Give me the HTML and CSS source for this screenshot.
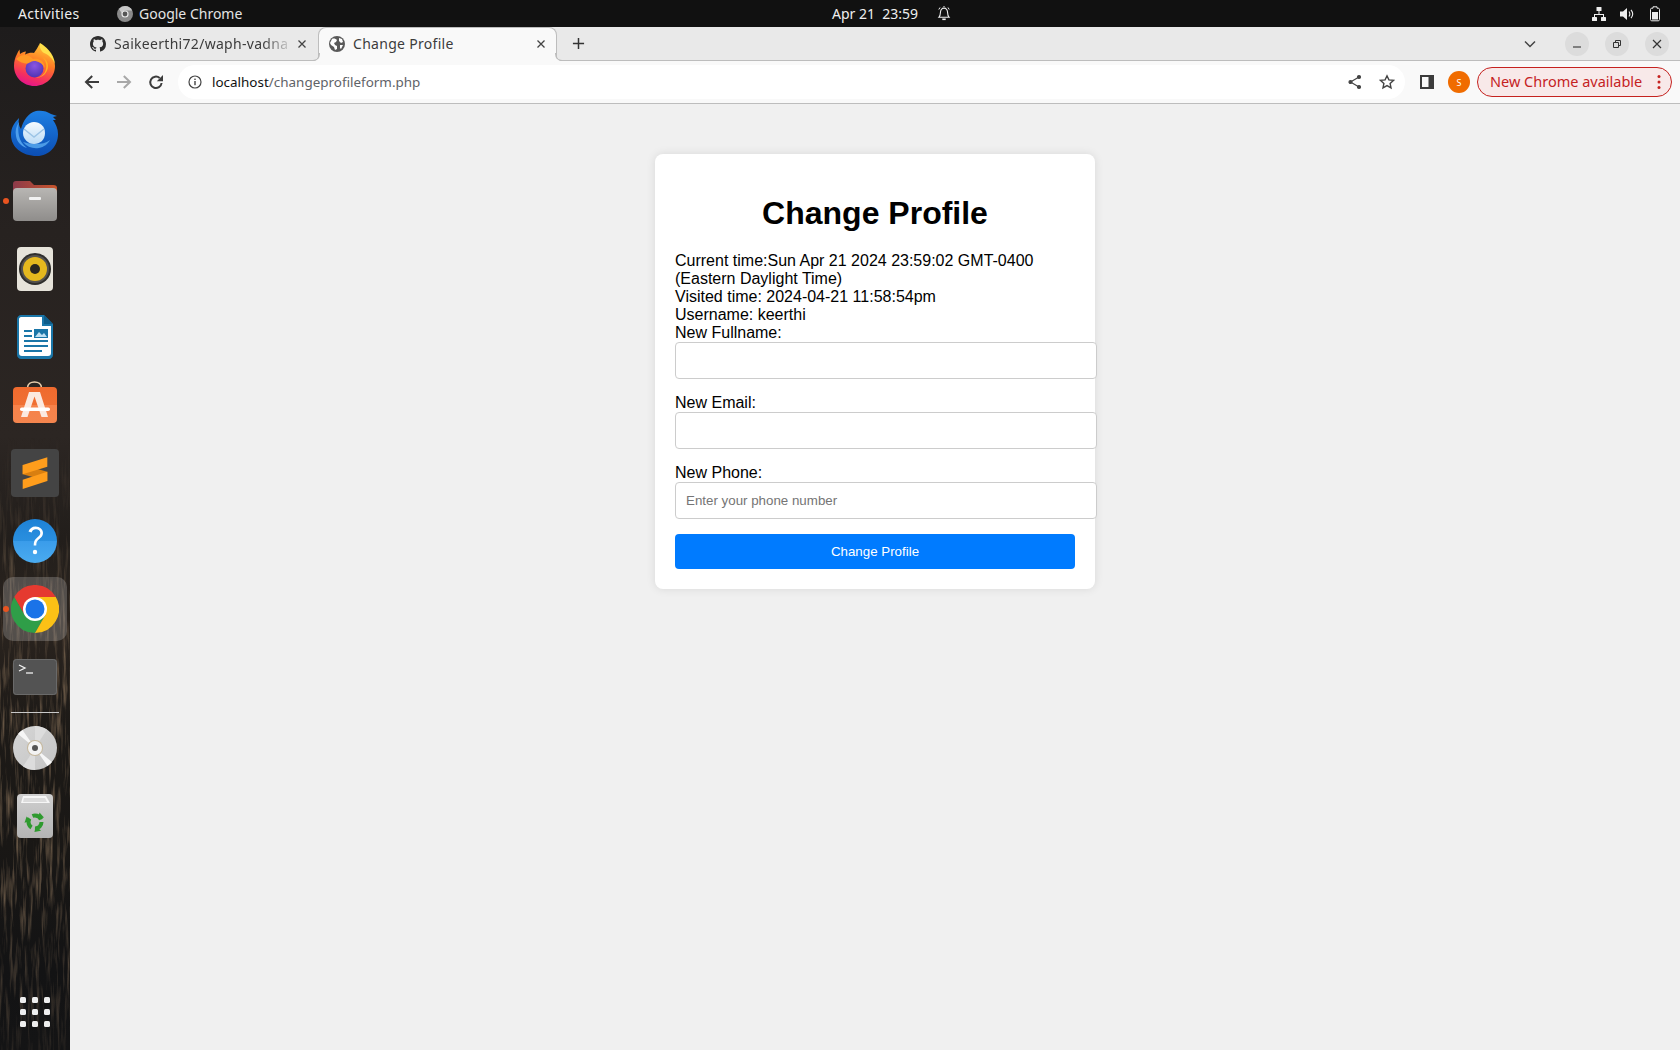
FILE: index.html
```html
<!DOCTYPE html>
<html lang="en">
<head>
<meta charset="utf-8">
<title>Change Profile</title>
<link rel="stylesheet" href="styles.css">
</head>
<body>
<div class="desktop">
  <header class="topbar">
    <div class="top-left">
      <span class="activities">Activities</span>
      <span class="app-menu">
        <svg class="app-menu-icon" viewBox="0 0 16 16"><circle cx="8" cy="8" r="8" fill="#8a8a8a"/><path d="M8 0a8 8 0 0 1 7.2 4.5H8A3.6 3.6 0 0 0 4.6 7L2 3a8 8 0 0 1 6-3z" fill="#c8c8c8"/><circle cx="8" cy="8" r="3.6" fill="#e8e8e8"/><circle cx="8" cy="8" r="2.4" fill="#555"/></svg>
        Google Chrome
      </span>
    </div>
    <div class="top-clock">
      <span>Apr 21&nbsp;&nbsp;23:59</span>
      <svg class="bell" viewBox="0 0 16 16" fill="none" stroke="#eee" stroke-width="1.1"><path d="M3 12.2c1-1 1.3-2.4 1.4-4.4C4.5 5 6 3.2 8 3.2s3.500 1.800 3.600 4.600c.1 2 .4 3.400 1.400 4.400z"/><path d="M7 2.600 8 1.400l1 1.200M2.800 4.500 4 2.500M13.200 4.500 12 2.500" stroke-width="1"/><path d="M6.300 14.300h3.400" stroke-width="1.600"/></svg>
    </div>
    <div class="top-status">
      <svg class="status-icon" viewBox="0 0 16 16" fill="#eee"><rect x="5.500" y="1" width="5" height="4" rx=".6"/><rect x="1" y="11" width="5" height="4" rx=".6"/><rect x="10" y="11" width="5" height="4" rx=".6"/><path d="M7.500 5h1v3h4.500v3h-1V9H4v2H3V8h4.500z"/></svg>
      <svg class="status-icon" viewBox="0 0 16 16" fill="#eee"><path d="M1 5.500h3L8 2v12l-4-3.500H1z"/><path d="M10 5.500c1 1.500 1 3.500 0 5M12 3.800c2 2.500 2 6 0 8.400" fill="none" stroke="#eee" stroke-width="1.100"/></svg>
      <svg class="status-icon" viewBox="0 0 16 16"><path d="M6 .8h4v1.400h1.300c.7 0 1.200.5 1.200 1.200v10.200c0 .7-.5 1.200-1.200 1.200H4.700c-.7 0-1.200-.5-1.200-1.200V3.400c0-.7.5-1.200 1.200-1.200H6z" fill="none" stroke="#eee" stroke-width="1"/><rect x="5" y="6" width="6" height="7.500" fill="#eee"/></svg>
    </div>
  </header>

  <nav class="dock">
    <svg class="dock-grain" width="70" height="1023">
      <defs>
        <filter id="grain" x="0" y="0" width="100%" height="100%">
          <feTurbulence type="fractalNoise" baseFrequency=".3 .025" numOctaves="3" seed="7"/>
          <feColorMatrix values="0 0 0 0 .3  0 0 0 0 .2  0 0 0 0 .12  1.700 0 0 0 -.8"/>
        </filter>
      </defs>
      <rect width="70" height="1023" filter="url(#grain)"/>
    </svg>
    <div class="dock-item">
      <svg class="dock-icon" viewBox="0 0 48 48">
        <defs>
          <linearGradient id="ff1" x1=".75" y1="0" x2=".4" y2="1"><stop offset="0" stop-color="#ffd23a"/><stop offset=".45" stop-color="#ff7a24"/><stop offset=".8" stop-color="#f5305f"/><stop offset="1" stop-color="#e4168a"/></linearGradient>
          <radialGradient id="ff2" cx=".5" cy=".35" r=".65"><stop offset="0" stop-color="#8a55e2"/><stop offset="1" stop-color="#4f34b4"/></radialGradient>
        </defs>
        <path d="M29 2c-1 4 2 6 6 9 5 4 9 8 9 14 0 11-9 20-20.500 20S3 36 3 25c0-5 1-8 3-12 .5-1.500 1.500-3 2.500-4.500l.5 4.500c2-1.500 4-2.500 6-2.500l-1 3c3-1.500 6-2 9-1.500C25 9 27 6 29 2z" fill="url(#ff1)"/>
        <path d="M29 2c5 3 14 10 15 21-2-5-6-9-11-11-3-2-5-6-4-10z" fill="#ffe04a"/>
        <circle cx="23.500" cy="27.500" r="9" fill="url(#ff2)"/>
        <path d="M5 18c4-4 9-5 13-3 2 1 3 2 4 3 5-1 11 1 12 9-3-5-7-7-11-7-4 .5-5 3-8 2.500C10 22 8 20 5 18z" fill="#ff9a26"/>
        <path d="M31 16c4 3 5 8 4 12-1 5-5 8-10 9 6 0 12-5 12-12 0-4-2-7-6-9z" fill="#ffb01f"/>
      </svg>
    </div>
    <div class="dock-item">
      <svg class="dock-icon" viewBox="0 0 48 48">
        <defs>
          <linearGradient id="tb1" x1="0" y1="0" x2="0" y2="1"><stop offset="0" stop-color="#1d7fe2"/><stop offset="1" stop-color="#0b4eb4"/></linearGradient>
          <linearGradient id="tb2" x1="0" y1="0" x2="0" y2="1"><stop offset="0" stop-color="#f4fafe"/><stop offset="1" stop-color="#bcdcf6"/></linearGradient>
        </defs>
        <path d="M25 2c5-1 11 0 15 3l6 2-4 1 3 3-3 0c3 4 5 9 5 14 0 12-9 22-21 22C11 47 0 38 0 26 0 19 3 14 8 9c-1 5 0 8 2 11 2-8 7-16 15-18z" fill="url(#tb1)"/>
        <path d="M8 13c-3 4-4 9-3 14 1 6 5 10 11 12-4-3-7-7-8-12-1-5-1-9 0-14z" fill="#4e9fec"/>
        <path d="M12 33c4 5 10 7 16 6 5-1 9-4 11-8-4 3-9 4-14 4-5 0-9-1-13-2z" fill="#4b9be6"/>
        <path d="M23 13c6 0 11 4 11 11s-5 11-11 11-11-5-11-11 5-11 11-11z" fill="url(#tb2)"/>
        <path d="M13 20l10 8 10-8" fill="none" stroke="#9cc4e6" stroke-width="1.400"/>
      </svg>
    </div>
    <div class="dock-item is-running">
      <svg class="dock-icon" viewBox="0 0 48 48">
        <defs>
          <linearGradient id="fo1" x1="0" y1="0" x2="0" y2="1"><stop offset="0" stop-color="#b8b6b3"/><stop offset="1" stop-color="#8f8d8b"/></linearGradient>
          <linearGradient id="fo2" x1="0" y1="0" x2="1" y2="0"><stop offset="0" stop-color="#8c3a4a"/><stop offset="1" stop-color="#c9552c"/></linearGradient>
        </defs>
        <path d="M2 7c0-2 1-3 3-3h14l4 4h19c3 0 4 1 4 3v8H2z" fill="url(#fo2)"/>
        <rect x="2" y="11" width="44" height="33" rx="4" fill="url(#fo1)"/>
        <rect x="18" y="20" width="12" height="3" rx="1" fill="#f2f2f2"/>
      </svg>
    </div>
    <div class="dock-item">
      <svg class="dock-icon" viewBox="0 0 48 48">
        <rect x="6" y="2" width="36" height="44" rx="4" fill="#e6e3da"/>
        <circle cx="24" cy="24" r="16" fill="#2f2e2c"/>
        <circle cx="24" cy="24" r="14" fill="#55524e"/>
        <circle cx="24" cy="24" r="12" fill="#e5b81e"/>
        <circle cx="24" cy="24" r="5" fill="#2a2620"/>
      </svg>
    </div>
    <div class="dock-item">
      <svg class="dock-icon" viewBox="0 0 48 48">
        <path d="M10 2h23l9 9v31c0 2-2 4-4 4H10c-2 0-4-2-4-4V6c0-2 2-4 4-4z" fill="#1a76a8"/>
        <path d="M10 4h21v9h9v27c0 2-1 3-3 3H11c-2 0-3-1-3-3V6c0-1 1-2 2-2z" fill="#fff"/>
        <path d="M33 2l9 9h-9z" fill="#0e5d8a"/>
        <path d="M13 17h8v2h-8zM13 22h8v2h-8zM13 27h24v2H13zM13 32h24v2H13zM13 37h18v2H13z" fill="#1a76a8"/>
        <rect x="23" y="16" width="14" height="9" fill="#1a76a8"/>
        <path d="M24 24l4-5 3 3 2-2 3 4z" fill="#bfe0f2"/>
      </svg>
    </div>
    <div class="dock-item">
      <svg class="dock-icon" viewBox="0 0 48 48">
        <defs><linearGradient id="st1" x1="0" y1="0" x2="0" y2="1"><stop offset="0" stop-color="#ef6a2e"/><stop offset=".5" stop-color="#f06f33"/><stop offset=".5" stop-color="#f6824a"/><stop offset="1" stop-color="#f4854e"/></linearGradient></defs>
        <path d="M16.500 7c0-8 14-8 14 0" fill="none" stroke="#e9cfae" stroke-width="1.600"/>
        <rect x="2" y="6" width="44" height="36" rx="4" fill="url(#st1)"/>
        <path d="M18 11h11l8 25h-6.500L23.500 15.500 16.500 36H10z" fill="#fbe9e0"/>
        <rect x="9" y="26.500" width="30" height="3.500" rx="1.750" fill="#fff"/>
      </svg>
    </div>
    <div class="dock-item">
      <svg class="dock-icon" viewBox="0 0 48 48">
        <rect width="48" height="48" rx="4" fill="#444"/>
        <path d="M11.700 16 36.300 22.700V32L11.700 25.300z" fill="#d97f10"/>
        <path d="M11.700 16 36.300 8.300V17.700L11.700 25.300z" fill="#ff9d1c"/>
        <path d="M11.700 30.700 36.300 22.700V32L11.700 40z" fill="#ff9d1c"/>
      </svg>
    </div>
    <div class="dock-item">
      <svg class="dock-icon" viewBox="0 0 48 48">
        <defs><linearGradient id="he1" x1="0" y1="0" x2="0" y2="1"><stop offset="0" stop-color="#1e82d6"/><stop offset=".5" stop-color="#2a8fdf"/><stop offset=".5" stop-color="#3a9cea"/><stop offset="1" stop-color="#4aabf0"/></linearGradient></defs>
        <circle cx="24" cy="24" r="22" fill="url(#he1)"/>
        <path d="M17.500 14.500c1-3 3.500-5 7-5 4.500 0 7.500 3 7.500 6.500 0 3-2 4.800-4 6.300-2 1.500-2.700 2.900-2.700 6.200h-2.600c0-4 1-6 3.300-7.800 2-1.500 3.300-2.700 3.300-4.700 0-2-1.800-3.700-4.300-3.700-2.200 0-3.700 1.200-4.400 3.100z" fill="#fff"/>
        <circle cx="24" cy="35" r="2.200" fill="#fff"/>
      </svg>
    </div>
    <div class="dock-item is-running is-active">
      <svg class="dock-icon" viewBox="0 0 48 48">
        <path d="M24 24 44.800 12A24 24 0 0 0 3.200 12L13.600 30z" fill="#e53a30"/>
        <path d="M24 24 13.600 30 3.200 12A24 24 0 0 0 24 48L34.400 30z" fill="#2f9e48"/>
        <path d="M24 24 34.400 30 24 48A24 24 0 0 0 44.800 12H24z" fill="#fbc116"/>
        <circle cx="24" cy="24" r="12" fill="#fff"/>
        <circle cx="24" cy="24" r="9.500" fill="#1a73e8"/>
      </svg>
    </div>
    <div class="dock-item">
      <svg class="dock-icon dock-term" viewBox="0 0 44 36">
        <rect width="44" height="36" rx="3.500" fill="#535353"/>
        <rect x=".5" y=".5" width="43" height="35" rx="3" fill="none" stroke="#6a6a6a"/>
        <path d="M6 6l6 3-6 3" fill="none" stroke="#f2f2f2" stroke-width="1.300"/>
        <path d="M13 14h7" stroke="#f2f2f2" stroke-width="1.300"/>
      </svg>
    </div>
    <div class="dock-sep"></div>
    <div class="dock-item">
      <svg class="dock-icon" viewBox="0 0 48 48">
        <defs><linearGradient id="cd1" x1="0" y1="0" x2="1" y2="1"><stop offset="0" stop-color="#d6d6d6"/><stop offset="1" stop-color="#c4c4c4"/></linearGradient></defs>
        <circle cx="24" cy="24" r="22" fill="url(#cd1)"/>
        <path d="M24 24 7 10A22 22 0 0 1 11.500 6zM24 24 41 38A22 22 0 0 1 36.500 42z" fill="#f6f6f6"/>
        <path d="M24 24 24 2A22 22 0 0 1 36 5.500zM24 24 24 46A22 22 0 0 1 12 42.500z" fill="#dcdcdc"/>
        <circle cx="24" cy="24" r="8" fill="#c5b79c"/>
        <circle cx="24" cy="24" r="7" fill="#f3f3f3"/>
        <circle cx="24" cy="24" r="3" fill="#555"/>
      </svg>
    </div>
    <div class="dock-item">
      <svg class="dock-icon" viewBox="0 0 48 48">
        <defs>
          <linearGradient id="tr1" x1="0" y1="0" x2="0" y2="1"><stop offset="0" stop-color="#cfcfcf"/><stop offset="1" stop-color="#b4b4b4"/></linearGradient>
          <path id="rec" d="M28.500 20.500 33 25.500l-6 1.500z" fill="#2e9a2e"/>
        </defs>
        <rect x="6" y="2" width="36" height="44" rx="4" fill="url(#tr1)"/>
        <path d="M10 11l2-7h23l4 7z" fill="#f6f6f6"/>
        <path d="M13 6h21l2 4H12z" fill="#dcdcdc"/>
        <circle cx="24" cy="30" r="6.500" fill="none" stroke="#2e9a2e" stroke-width="4" stroke-dasharray="10 3.610"/>
        <use href="#rec"/>
        <use href="#rec" transform="rotate(120 24 30)"/>
        <use href="#rec" transform="rotate(240 24 30)"/>
      </svg>
    </div>
    <div class="dock-apps">
      <div class="apps-grid">
        <i></i><i></i><i></i><i></i><i></i><i></i><i></i><i></i><i></i>
      </div>
    </div>
  </nav>

  <div class="browser">
    <div class="tabstrip">
      <div class="tab">
        <svg class="tab-favicon" viewBox="0 0 16 16" fill="#2e2e2e"><path d="M8 0C3.580 0 0 3.580 0 8c0 3.540 2.290 6.530 5.470 7.590.4.070.55-.17.55-.38 0-.19-.01-.82-.01-1.490-2.010.37-2.530-.49-2.690-.94-.09-.23-.48-.94-.82-1.130-.28-.15-.68-.52-.01-.53.63-.01 1.080.58 1.230.82.72 1.210 1.870.87 2.330.66.07-.52.28-.87.51-1.070-1.780-.2-3.640-.89-3.640-3.950 0-.87.31-1.590.82-2.150-.08-.2-.36-1.020.08-2.120 0 0 .67-.21 2.200.82.64-.18 1.320-.27 2-.27.68 0 1.360.09 2 .27 1.530-1.040 2.200-.82 2.200-.82.44 1.100.16 1.920.08 2.120.51.56.82 1.270.82 2.150 0 3.070-1.870 3.750-3.650 3.950.29.25.54.73.54 1.480 0 1.070-.01 1.930-.01 2.200 0 .21.15.46.55.38A8.013 8.013 0 0 0 16 8c0-4.420-3.580-8-8-8z"/></svg>
        <span class="tab-title tab-title-fade">Saikeerthi72/waph-vadna</span>
        <svg class="tab-close" viewBox="0 0 10 10" stroke="#444" stroke-width="1.300"><path d="M1.500 1.500l7 7M8.500 1.500l-7 7"/></svg>
      </div>
      <div class="tab tab-active">
        <svg class="tab-favicon" viewBox="0 0 16 16"><circle cx="8" cy="8" r="8" fill="#5a5a5a"/><path d="M3 3c2-1 4 0 5 1l-1 2-2 1 1 2 2 1v3l-2 1-1-3-3-2-1-2zM10 2l3 1 1 3-2 1-2-2zM11 9l3 0-2 4-1-1z" fill="#fff"/></svg>
        <span class="tab-title">Change Profile</span>
        <svg class="tab-close" viewBox="0 0 10 10" stroke="#444" stroke-width="1.300"><path d="M1.500 1.500l7 7M8.500 1.500l-7 7"/></svg>
      </div>
      <svg class="new-tab" viewBox="0 0 14 14" stroke="#333" stroke-width="1.600"><path d="M7 1v12M1 7h12"/></svg>
      <div class="strip-right">
        <svg class="tab-search" viewBox="0 0 12 8" fill="none" stroke="#444" stroke-width="1.500"><path d="M1 1.500l5 5 5-5"/></svg>
        <div class="win-buttons">
          <span class="win-btn"><svg viewBox="0 0 10 10" stroke="#333" stroke-width="1.100"><path d="M1 8h8"/></svg></span>
          <span class="win-btn"><svg viewBox="0 0 10 10" fill="none" stroke="#333" stroke-width="1"><path d="M1.500 3.500h5v5h-5zM3.500 3.500V1.500h5v5h-2"/></svg></span>
          <span class="win-btn"><svg viewBox="0 0 10 10" stroke="#333" stroke-width="1.200"><path d="M1 1l8 8M9 1l-8 8"/></svg></span>
        </div>
      </div>
    </div>

    <div class="toolbar">
      <span class="tool-btn"><svg viewBox="0 0 16 16" fill="none" stroke="#3c3c3c" stroke-width="2"><path d="M15 8H2M8.200 2 2 8l6.200 6"/></svg></span>
      <span class="tool-btn"><svg viewBox="0 0 16 16" fill="none" stroke="#a8a8a8" stroke-width="2"><path d="M1 8h13M7.800 2 14 8l-6.200 6"/></svg></span>
      <span class="tool-btn"><svg viewBox="0 0 16 16"><path d="M13.600 9a5.700 5.700 0 1 1-1.900-5" fill="none" stroke="#3c3c3c" stroke-width="2"/><path d="M15 1v6.200H8.800z" fill="#3c3c3c"/></svg></span>
      <div class="omnibox">
        <svg class="omni-info" viewBox="0 0 14 14"><circle cx="7" cy="7" r="6" fill="none" stroke="#444" stroke-width="1.200"/><rect x="6.300" y="6" width="1.400" height="4.200" fill="#444"/><rect x="6.300" y="3.600" width="1.400" height="1.400" fill="#444"/></svg>
        <span class="url"><span class="url-host">localhost</span>/changeprofileform.php</span>
        <div class="omni-actions">
          <span class="tool-btn"><svg viewBox="0 0 16 16" fill="#444" stroke="#444" stroke-width="1.200"><circle cx="12" cy="3" r="1.500"/><circle cx="12" cy="13" r="1.500"/><circle cx="3.500" cy="8" r="1.500"/><path d="M12 3 3.500 8l8.500 5" fill="none"/></svg></span>
          <span class="tool-btn"><svg viewBox="0 0 16 16" fill="none" stroke="#444" stroke-width="1.400"><path d="M8 1.800l1.900 4.100 4.500.5-3.300 3 .9 4.500L8 11.600l-4 2.300.9-4.500-3.300-3 4.500-.5z"/></svg></span>
        </div>
      </div>
      <span class="tool-btn side-btn"><svg viewBox="0 0 14 14"><rect width="14" height="14" fill="#3c3c3c"/><rect x="2" y="2" width="6.500" height="10" fill="#fafafa"/></svg></span>
      <span class="avatar-slot"><span class="avatar">S</span></span>
      <div class="update-pill">
        <span class="pill-text">New Chrome available</span>
        <svg class="pill-menu" viewBox="0 0 4 16" fill="#c5221f"><circle cx="2" cy="2.500" r="1.500"/><circle cx="2" cy="8" r="1.500"/><circle cx="2" cy="13.500" r="1.500"/></svg>
      </div>
    </div>

    <main class="page">
      <section class="card">
        <h1 class="card-title">Change Profile</h1>
        <div>Current time:Sun Apr 21 2024 23:59:02 GMT-0400 (Eastern Daylight Time)</div>
        <div>Visited time: 2024-04-21 11:58:54pm</div>
        <div>Username: keerthi</div>
        <form class="form">
          <label class="field-label" for="fullname">New Fullname:</label>
          <input class="field" id="fullname" type="text">
          <label class="field-label" for="email">New Email:</label>
          <input class="field" id="email" type="text">
          <label class="field-label" for="phone">New Phone:</label>
          <input class="field" id="phone" type="text" placeholder="Enter your phone number">
          <button class="submit" type="button">Change Profile</button>
        </form>
      </section>
    </main>
  </div>
</div>
</body>
</html>
```

FILE: styles.css
```css
* { box-sizing: border-box; }
html, body { margin: 0; height: 100%; overflow: hidden; }
body { font-family: "Liberation Sans", Arial, sans-serif; font-size: 16px; color: #000; }

.desktop {
  display: grid;
  grid-template-columns: 70px 1fr;
  grid-template-rows: 27px 1fr;
  width: 1680px;
  height: 1050px;
}

/* Top bar */
.topbar {
  grid-column: 1 / 3;
  display: flex;
  align-items: center;
  background: #111;
  color: #eee;
  font-family: "Noto Sans", sans-serif;
  font-size: 14px;
}
.top-left { display: flex; align-items: center; width: 832px; padding-left: 18px; }
.activities { width: 99px; letter-spacing: .32px; }
.app-menu { display: flex; align-items: center; gap: 6px; color: #e4e4e4; }
.app-menu-icon { width: 16px; height: 16px; }
.top-clock { display: flex; align-items: center; gap: 18px; }
.bell { width: 16px; height: 16px; margin-top: -2px; }
.top-status { display: flex; align-items: center; gap: 12px; margin-left: auto; padding-right: 17px; }
.status-icon { width: 16px; height: 16px; }

/* Dock */
.dock {
  position: relative;
  display: flex;
  flex-direction: column;
  align-items: center;
  padding: 4px 0;
  overflow: hidden;
  background: linear-gradient(180deg, #1e1c1c 0, #272220 20%, #2c2623 40%, #221e1b 50%, #2b241f 58%, #1d1a17 68%, #191715 80%, #131314 92%, #141415 100%);
}
.dock-grain {
  position: absolute;
  left: 0;
  top: 0;
  -webkit-mask-image: linear-gradient(180deg, transparent 40%, #000 62%, #000 82%, rgba(0, 0, 0, .35) 100%);
  mask-image: linear-gradient(180deg, transparent 40%, #000 62%, #000 82%, rgba(0, 0, 0, .35) 100%);
}
.dock-item { position: relative; flex: none; display: flex; align-items: center; justify-content: center; width: 70px; height: 68px; }
.dock-icon { display: block; width: 48px; height: 48px; }
.dock-term { width: 44px; height: 36px; }
.is-running::before {
  content: "";
  position: absolute;
  left: 3px;
  top: 31px;
  width: 6px;
  height: 6px;
  border-radius: 50%;
  background: #e95420;
}
.is-active::after {
  content: "";
  position: absolute;
  left: 3px;
  top: 2px;
  width: 64px;
  height: 64px;
  border-radius: 10px;
  background: rgba(255, 255, 255, .2);
  z-index: 0;
}
.is-active .dock-icon { position: relative; z-index: 1; }
.is-active::before { z-index: 1; }
.dock-sep { position: relative; flex: none; width: 48px; height: 1px; margin: 1px 0 1px; background: #c8c8c8; }
.dock-apps { position: relative; flex: none; display: flex; align-items: center; justify-content: center; width: 70px; height: 68px; margin-top: auto; }
.apps-grid { display: grid; grid-template-columns: repeat(3, 6px); gap: 6px; }
.apps-grid i { display: block; width: 6px; height: 6px; border-radius: 1.500px; background: #eee; }

/* Browser */
.browser { display: flex; flex-direction: column; min-width: 0; min-height: 0; }
.tabstrip {
  position: relative;
  display: flex;
  align-items: center;
  flex: none;
  height: 34px;
  padding-left: 8px;
  background: #e9e9e9;
  border-bottom: 1px solid #bdbdbd;
  font-family: "Noto Sans", sans-serif;
  font-size: 14px;
  letter-spacing: .3px;
  color: #3c3c3c;
}
.tab { display: flex; align-items: center; flex: none; width: 240px; height: 33px; padding: 0 11px 0 12px; }
.tab-active {
  position: relative;
  align-self: flex-end;
  height: 34px;
  margin-bottom: -1px;
  width: 239px;
  padding: 0 10px 2px 10px;
  background: #f9f9f9;
  border: 1px solid #bdbdbd;
  border-bottom: 0;
  border-radius: 8px 8px 0 0;
  z-index: 1;
}
.tab-active::before,
.tab-active::after {
  content: "";
  position: absolute;
  bottom: 0;
  width: 7px;
  height: 7px;
  background: transparent;
  border-bottom: 1px solid #bdbdbd;
}
.tab-active::before {
  left: -7px;
  border-right: 1px solid #bdbdbd;
  border-bottom-right-radius: 7px;
  box-shadow: 3px 3px 0 #f9f9f9;
}
.tab-active::after {
  right: -7px;
  border-left: 1px solid #bdbdbd;
  border-bottom-left-radius: 7px;
  box-shadow: -3px 3px 0 #f9f9f9;
}
.tab-favicon { flex: none; width: 16px; height: 16px; margin-right: 8px; }
.tab-title { flex: 1; min-width: 0; white-space: nowrap; }
.tab-title-fade { -webkit-mask-image: linear-gradient(90deg, #000 85%, rgba(0, 0, 0, .15) 100%); mask-image: linear-gradient(90deg, #000 85%, rgba(0, 0, 0, .15) 100%); }
.tab-close { flex: none; width: 10px; height: 10px; margin-left: 8px; }
.new-tab { flex: none; width: 13px; height: 13px; margin-left: 15px; }
.strip-right { display: flex; align-items: center; margin-left: auto; padding-right: 11px; }
.tab-search { width: 12px; height: 8px; margin-right: 29px; }
.win-buttons { display: flex; gap: 16px; }
.win-btn { display: flex; align-items: center; justify-content: center; width: 24px; height: 24px; border-radius: 50%; background: #dcdcdc; }
.win-btn svg { width: 10px; height: 10px; }

.toolbar {
  display: flex;
  align-items: center;
  flex: none;
  height: 43px;
  padding: 0 8px 0 6px;
  background: #f9f9f9;
  border-bottom: 1px solid #bdbdbd;
}
.tool-btn { display: flex; align-items: center; justify-content: center; flex: none; width: 32px; height: 32px; }
.tool-btn svg { width: 16px; height: 16px; }
.omnibox {
  display: flex;
  align-items: center;
  flex: none;
  width: 1227px;
  height: 34px;
  margin: 0 6px;
  padding: 0 2px 0 10px;
  border-radius: 17px;
  background: #fff;
  font-family: "Noto Sans", sans-serif;
  font-size: 13.450px;
  color: #5f6368;
}
.omni-info { flex: none; width: 14px; height: 14px; margin-right: 10px; }
.url-host { color: #111; }
.omni-actions { display: flex; margin-left: auto; }
.side-btn svg { width: 14px; height: 14px; }
.avatar-slot { display: flex; align-items: center; justify-content: center; flex: none; width: 32px; }
.avatar { display: flex; align-items: center; justify-content: center; width: 22px; height: 22px; border-radius: 50%; background: #f06c00; color: #fff; font-size: 9px; font-family: "Noto Sans", sans-serif; }
.update-pill {
  display: flex;
  align-items: center;
  justify-content: space-between;
  flex: none;
  width: 195px;
  height: 30px;
  margin-left: 2px;
  padding: 0 10px 0 12px;
  border: 1px solid #c5221f;
  border-radius: 15px;
  background: #f8e9e9;
  color: #c5221f;
  font-family: "Noto Sans", sans-serif;
  font-size: 14.500px;
  white-space: nowrap;
}
.pill-text { margin-bottom: 2px; }
.pill-menu { width: 4px; height: 16px; }

/* Page */
.page { flex: 1; display: flex; flex-direction: column; align-items: center; padding-top: 50px; background: #f0f0f0; min-height: 0; }
.card {
  width: 440px;
  padding: 20px;
  background: #fff;
  border-radius: 8px;
  box-shadow: 0 0 10px rgba(0, 0, 0, .1);
}
.card-title { margin: 21.440px 0 19.440px; font-size: 32px; font-weight: 700; text-align: center; }
.field-label { display: block; }
.field {
  display: block;
  box-sizing: content-box;
  width: 100%;
  margin: 0 0 15px;
  padding: 10px;
  border: 1px solid #ccc;
  border-radius: 4px;
  background: #fff;
  font-family: "Liberation Sans", Arial, sans-serif;
  font-size: 13.333px;
}
.field::placeholder { color: #757575; }
.submit {
  display: block;
  width: 100%;
  padding: 10px;
  border: 0;
  border-radius: 4px;
  background: #007bff;
  color: #fff;
  font-family: "Liberation Sans", Arial, sans-serif;
  font-size: 13.333px;
}
```
